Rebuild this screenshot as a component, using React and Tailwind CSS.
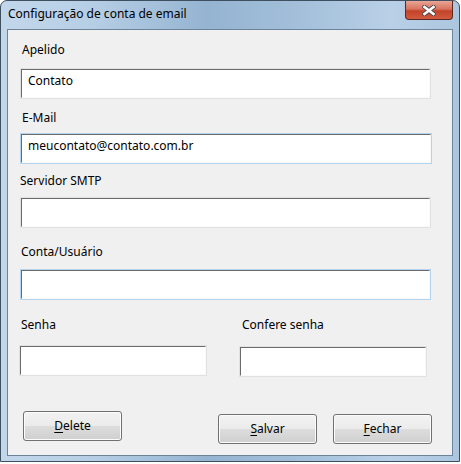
import React from 'react'

const font = { fontFamily: '"Noto Sans", "Open Sans", sans-serif' }

function Field({ value, hover, className = 'w-[411px]' }) {
  return (
    <div className={`${className} h-[31px] border ${hover ? 'border-[#b3d3ee]' : 'border-[#e1e1e1]'}`}>
      <div className="h-full border-t border-l border-[#6b6b6b] border-r border-b border-r-[#fafafa] border-b-[#fafafa] bg-white pl-[6px] pt-[3px] text-[12px] leading-[16px] text-black">
        {value}
      </div>
    </div>
  )
}

function Btn({ mnemonic, rest }) {
  return (
    <button className="w-[99px] h-[30px] rounded-[3px] border border-[#707070] bg-[linear-gradient(180deg,#f2f2f2_0%,#ebebeb_50%,#dddddd_50%,#cfcfcf_100%)] shadow-[inset_0_0_0_1px_#fcfcfc] text-[12px] text-black">
      <span className="underline underline-offset-2">{mnemonic}</span>
      {rest}
    </button>
  )
}

export default function App() {
  return (
    <div className="w-[461px] h-[464px] bg-white" style={font}>
      <div className="w-[460px] h-[462px] rounded-t-[7px] border border-[#3e4f60] bg-[linear-gradient(90deg,#c3d7eb_0%,#b6cee5_20%,#95b4d1_45%,#a3bfda_65%,#b9d0e7_85%,#acc6df_100%)] flex flex-col">
        {/* title bar */}
        <div className="h-[28px] flex items-start justify-between">
          <div className="pl-[7px] pt-[5px] text-[12px] leading-[16px] text-black">Configuração de conta de email</div>
          <div className="mr-[6px] w-[48px] h-[19px] rounded-b-[4px] border border-t-0 border-[#5a2a22] bg-[linear-gradient(180deg,#e8a594_0%,#d9735e_45%,#c2432a_55%,#d25a3e_100%)] flex items-center justify-center">
            <svg width="14" height="11" viewBox="0 0 14 11">
              <path d="M2.5 2 L11.5 9 M11.5 2 L2.5 9" stroke="#4a4a4a" strokeWidth="4.4" strokeLinecap="square" />
              <path d="M2.5 2 L11.5 9 M11.5 2 L2.5 9" stroke="#ffffff" strokeWidth="2.6" strokeLinecap="square" />
            </svg>
          </div>
        </div>

        {/* client area */}
        <div className="mx-[6px] h-[427px] border border-[#6d8399] bg-[#f0f0f0] text-[12px] leading-[16px] text-black">
          <div className="pt-[12px] pl-[12px]">
            <div className="pl-[2px]">Apelido</div>
            <div className="mt-[10px]"><Field value="Contato" /></div>

            <div className="mt-[11px] pl-[2px]">E-Mail</div>
            <div className="mt-[7px]"><Field value="meucontato@contato.com.br" hover className="w-[412px]" /></div>

            <div className="mt-[9px]">Servidor SMTP</div>
            <div className="mt-[8px]"><Field value="" /></div>

            <div className="mt-[16px] pl-[1px]">Conta/Usuário</div>
            <div className="mt-[9px]"><Field value="" hover /></div>

            <div className="mt-[17px] flex">
              <div className="w-[220px] pl-[1px]">Senha</div>
              <div className="pl-[2px]">Confere senha</div>
            </div>
            <div className="mt-[12px] flex items-start">
              <div className="-ml-[1px]"><Field value="" className="w-[188px]" /></div>
              <div className="ml-[32px] mt-[1px]"><Field value="" className="w-[188px]" /></div>
            </div>

            <div className="mt-[34px] flex items-start">
              <div className="ml-[3px]"><Btn mnemonic="D" rest="elete" /></div>
              <div className="ml-[96px] mt-[3px]"><Btn mnemonic="S" rest="alvar" /></div>
              <div className="ml-[16px] mt-[3px]"><Btn mnemonic="F" rest="echar" /></div>
            </div>
          </div>
        </div>
      </div>
    </div>
  )
}
